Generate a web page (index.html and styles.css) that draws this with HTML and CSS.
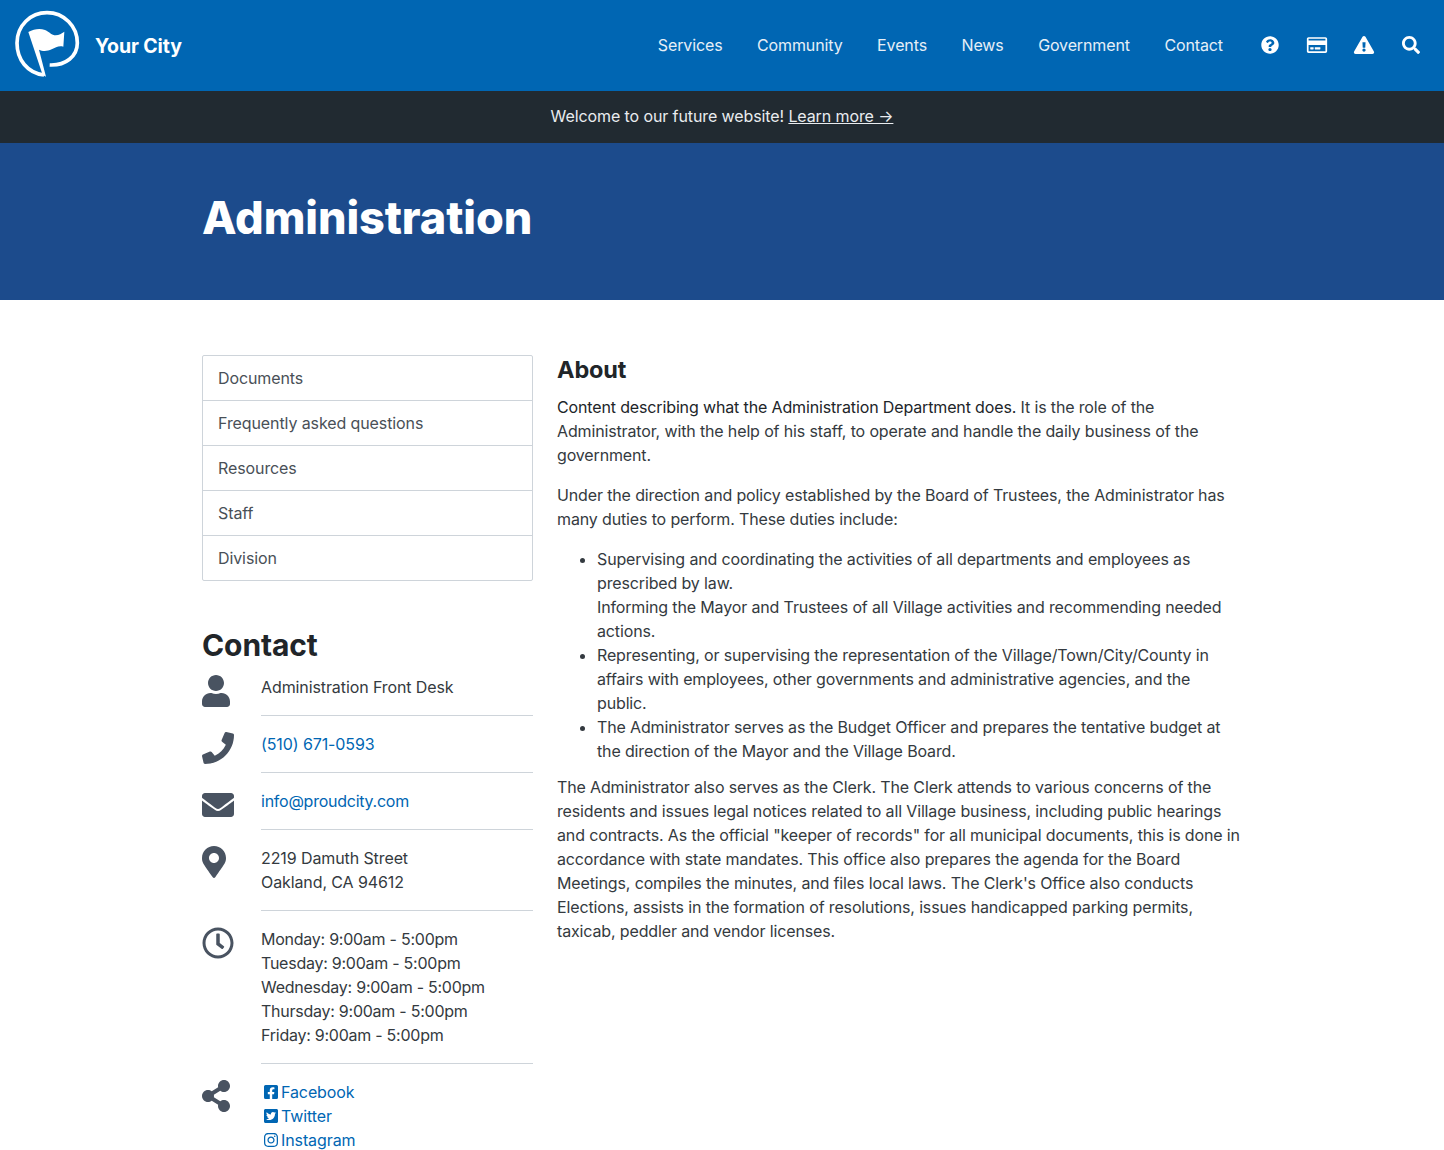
FILE: index.html
```html
<!DOCTYPE html>
<html lang="en">

<head>
  <meta charset="UTF-8">
  <meta name="viewport" content="width=device-width, initial-scale=1.0">
  <title>Administration</title>
  <link rel="stylesheet" href="styles.css">
</head>

<body>
  <header class="topbar">
    <a class="brand" href="#">
      <svg class="brand-logo" viewBox="0 0 222 222" aria-hidden="true">
        <path class="brand-ring" d="M105 201C55 195 24 155 24 105 24 52 65 14 114 14 165 14 205 55 205 105 205 145 170 173 122 171" />
        <path class="brand-flag" d="M58 72C75 63 92 60 108 66 122 72 128 82 140 82 150 82 158 76 166 71L163 116C150 112 140 118 128 124 115 130 100 130 90 125L111 206 101 201Z" />
      </svg>
      <span class="brand-name">Your City</span>
    </a>
    <nav class="main-nav">
      <a href="#">Services</a>
      <a href="#">Community</a>
      <a href="#">Events</a>
      <a href="#">News</a>
      <a href="#">Government</a>
      <a href="#">Contact</a>
    </nav>
    <div class="tool-icons">
      <svg viewBox="0 0 512 512" class="tool-icon"><path d="M504 256c0 136.997-111.043 248-248 248S8 392.997 8 256C8 119.083 119.043 8 256 8s248 111.083 248 248zM262.655 90c-54.497 0-89.255 22.957-116.549 63.758-3.536 5.286-2.353 12.415 2.715 16.258l34.699 26.31c5.205 3.947 12.621 3.008 16.665-2.122 17.864-22.658 30.113-35.797 57.303-35.797 20.429 0 45.698 13.148 45.698 32.958 0 14.976-12.363 22.667-32.534 33.976C247.128 238.528 216 254.941 216 296v4c0 6.627 5.373 12 12 12h56c6.627 0 12-5.373 12-12v-1.333c0-28.462 83.186-29.647 83.186-106.667 0-58.002-60.165-102-116.531-102zM256 338c-25.365 0-46 20.635-46 46 0 25.364 20.635 46 46 46s46-20.636 46-46c0-25.365-20.635-46-46-46z" /></svg>
      <svg viewBox="0 0 576 512" class="tool-icon"><path d="M527.900 32H48.100C21.500 32 0 53.500 0 80v352c0 26.500 21.500 48 48.100 48h479.800c26.600 0 48.100-21.500 48.100-48V80c0-26.500-21.500-48-48.100-48zM54.100 80h467.800c3.300 0 6 2.700 6 6v42H48.100V86c0-3.300 2.700-6 6-6zm467.800 352H54.100c-3.300 0-6-2.700-6-6V256h479.800v170c0 3.300-2.700 6-6 6zM192 332v40c0 6.600-5.400 12-12 12h-72c-6.600 0-12-5.400-12-12v-40c0-6.600 5.400-12 12-12h72c6.600 0 12 5.400 12 12zm192 0v40c0 6.600-5.400 12-12 12H236c-6.600 0-12-5.400-12-12v-40c0-6.600 5.400-12 12-12h136c6.600 0 12 5.400 12 12z" /></svg>
      <svg viewBox="0 0 576 512" class="tool-icon"><path d="M569.517 440.013C587.975 472.007 564.806 512 527.940 512H48.054c-36.937 0-59.999-40.055-41.577-71.987L246.423 24.005c18.467-32.009 64.720-31.951 83.154 0l239.940 416.008zM288 354c-25.405 0-46 20.595-46 46s20.595 46 46 46 46-20.595 46-46-20.595-46-46-46zm-43.673-165.346l7.418 136c.347 6.364 5.609 11.346 11.982 11.346h48.546c6.373 0 11.635-4.982 11.982-11.346l7.418-136c.375-6.874-5.098-12.654-11.982-12.654h-63.383c-6.884 0-12.356 5.780-11.981 12.654z" /></svg>
      <svg viewBox="0 0 512 512" class="tool-icon"><path d="M505 442.700L405.300 343c-4.500-4.500-10.600-7-17-7H372c27.600-35.300 44-79.700 44-128C416 93.100 322.900 0 208 0S0 93.100 0 208s93.100 208 208 208c48.300 0 92.700-16.400 128-44v16.300c0 6.400 2.500 12.500 7 17l99.700 99.700c9.400 9.400 24.600 9.400 33.900 0l28.300-28.300c9.400-9.400 9.400-24.600.1-34zM208 336c-70.700 0-128-57.200-128-128 0-70.700 57.200-128 128-128 70.700 0 128 57.200 128 128 0 70.700-57.200 128-128 128z" /></svg>
    </div>
  </header>

  <div class="notice">Welcome to our future website! <a href="#">Learn more →</a></div>

  <section class="hero">
    <h1>Administration</h1>
  </section>

  <main class="page">
    <aside class="sidebar">
      <ul class="side-list">
        <li><a href="#">Documents</a></li>
        <li><a href="#">Frequently asked questions</a></li>
        <li><a href="#">Resources</a></li>
        <li><a href="#">Staff</a></li>
        <li><a href="#">Division</a></li>
      </ul>

      <h2 class="contact-title">Contact</h2>
      <div class="contact-row">
        <svg class="contact-icon" viewBox="0 0 448 512" preserveAspectRatio="xMinYMid"><path d="M224 256c70.700 0 128-57.300 128-128S294.700 0 224 0 96 57.300 96 128s57.300 128 128 128zm89.600 32h-16.700c-22.200 10.200-46.900 16-72.900 16s-50.600-5.800-72.900-16h-16.700C60.200 288 0 348.200 0 422.400V464c0 26.500 21.500 48 48 48h352c26.500 0 48-21.500 48-48v-41.600c0-74.200-60.200-134.400-134.400-134.400z" /></svg>
        <div class="contact-text">Administration Front Desk</div>
      </div>
      <div class="contact-row">
        <svg class="contact-icon" viewBox="0 0 512 512" preserveAspectRatio="xMinYMid"><path d="M493.400 24.600l-104-24c-11.300-2.600-22.900 3.300-27.500 13.900l-48 112c-4.200 9.800-1.400 21.300 6.900 28l60.600 49.600c-36 76.700-98.900 140.500-177.200 177.200l-49.600-60.600c-6.800-8.300-18.200-11.100-28-6.900l-112 48C3.900 366.500-2 378.100.6 389.400l24 104C27.100 504.200 36.700 512 48 512c256.100 0 464-207.500 464-464 0-11.200-7.700-20.900-18.600-23.400z" /></svg>
        <div class="contact-text"><a href="#">(510) 671-0593</a></div>
      </div>
      <div class="contact-row">
        <svg class="contact-icon" viewBox="0 0 512 512" preserveAspectRatio="xMinYMid"><path d="M502.300 190.800c3.900-3.100 9.700-.2 9.700 4.700V400c0 26.500-21.500 48-48 48H48c-26.500 0-48-21.500-48-48V195.600c0-5 5.700-7.800 9.700-4.700 22.400 17.400 52.100 39.500 154.100 113.600 21.100 15.400 56.700 47.800 92.200 47.600 35.700.3 72-32.800 92.300-47.600 102-74.100 131.600-96.300 154-113.700zM256 320c23.200.4 56.600-29.200 73.400-41.400 132.700-96.300 142.800-104.700 173.400-128.700 5.800-4.500 9.200-11.500 9.200-18.900v-19c0-26.500-21.500-48-48-48H48C21.500 64 0 85.500 0 112v19c0 7.400 3.400 14.300 9.200 18.900 30.600 23.900 40.700 32.400 173.400 128.700 16.800 12.200 50.200 41.800 73.400 41.400z" /></svg>
        <div class="contact-text tight"><a href="#">info@proudcity.com</a></div>
      </div>
      <div class="contact-row">
        <svg class="contact-icon" viewBox="0 0 384 512" preserveAspectRatio="xMinYMid"><path d="M172.268 501.670C26.970 291.031 0 269.413 0 192 0 85.961 85.961 0 192 0s192 85.961 192 192c0 77.413-26.970 99.031-172.268 309.670-9.535 13.774-29.930 13.773-39.464 0zM192 272c44.183 0 80-35.817 80-80s-35.817-80-80-80-80 35.817-80 80 35.817 80 80 80z" /></svg>
        <div class="contact-text">2219 Damuth Street<br>Oakland, CA 94612</div>
      </div>
      <div class="contact-row">
        <svg class="contact-icon" viewBox="0 0 512 512" preserveAspectRatio="xMinYMid"><path d="M256 8C119 8 8 119 8 256s111 248 248 248 248-111 248-248S393 8 256 8zm0 448c-110.500 0-200-89.500-200-200S145.500 56 256 56s200 89.500 200 200-89.500 200-200 200zm61.800-104.400l-84.900-61.700c-3.100-2.300-4.900-5.900-4.900-9.700V116c0-6.600 5.400-12 12-12h32c6.600 0 12 5.400 12 12v141.700l66.800 48.600c5.400 3.900 6.500 11.400 2.600 16.800L334.600 349c-3.900 5.300-11.400 6.500-16.800 2.600z" /></svg>
        <div class="contact-text tight">Monday: 9:00am - 5:00pm<br>Tuesday: 9:00am - 5:00pm<br>Wednesday: 9:00am - 5:00pm<br>Thursday: 9:00am - 5:00pm<br>Friday: 9:00am - 5:00pm</div>
      </div>
      <div class="contact-row">
        <svg class="contact-icon" viewBox="0 0 448 512" preserveAspectRatio="xMinYMid"><path d="M352 320c-22.608 0-43.387 7.819-59.790 20.895l-102.486-64.054a96.551 96.551 0 0 0 0-41.683l102.486-64.054C308.613 184.181 329.392 192 352 192c53.019 0 96-42.981 96-96S405.019 0 352 0s-96 42.981-96 96c0 7.158.79 14.130 2.276 20.841L155.790 180.895C139.387 167.819 118.608 160 96 160c-53.019 0-96 42.981-96 96s42.981 96 96 96c22.608 0 43.387-7.819 59.790-20.895l102.486 64.054A96.301 96.301 0 0 0 256 416c0 53.019 42.981 96 96 96s96-42.981 96-96-42.981-96-96-96z" /></svg>
        <div class="contact-text social">
          <a href="#"><svg viewBox="0 0 448 512"><path d="M400 32H48A48 48 0 0 0 0 80v352a48 48 0 0 0 48 48h137.250V327.690h-63V256h63v-54.640c0-62.150 37-96.480 93.670-96.480 27.140 0 55.520 4.840 55.520 4.840v61h-31.270c-30.810 0-40.420 19.120-40.420 38.730V256h68.780l-11 71.690h-57.780V480H400a48 48 0 0 0 48-48V80a48 48 0 0 0-48-48z" /></svg>Facebook</a>
          <a href="#"><svg viewBox="0 0 448 512"><path d="M400 32H48C21.500 32 0 53.500 0 80v352c0 26.500 21.500 48 48 48h352c26.500 0 48-21.500 48-48V80c0-26.500-21.500-48-48-48zm-48.900 158.800c.2 2.800.2 5.700.2 8.500 0 86.700-66 186.600-186.600 186.600-37.200 0-71.700-10.800-100.700-29.400 5.300.6 10.400.8 15.800.8 30.700 0 58.900-10.400 81.400-28-28.800-.6-53-19.500-61.300-45.500 10.100 1.500 19.200 1.500 29.600-1.200-30-6.100-52.500-32.500-52.500-64.400v-.8c8.700 4.900 18.900 7.900 29.600 8.300a65.447 65.447 0 0 1-29.200-54.600c0-12.200 3.200-23.400 8.900-33.100 32.300 39.800 80.800 65.800 135.200 68.600-9.300-44.500 24-80.600 64-80.600 18.900 0 35.900 7.900 47.900 20.700 14.800-2.800 29-8.300 41.600-15.800-4.900 15.200-15.100 28-28.600 36 13.100-1.400 25.800-5 37.500-10.100-8.900 13.100-20.100 24.700-32.900 34z" /></svg>Twitter</a>
          <a href="#"><svg viewBox="0 0 448 512"><path d="M224.100 141c-63.600 0-114.900 51.300-114.900 114.900s51.300 114.900 114.900 114.900S339 319.500 339 255.900 287.700 141 224.100 141zm0 189.600c-41.100 0-74.700-33.500-74.700-74.700s33.500-74.700 74.700-74.700 74.700 33.500 74.700 74.700-33.600 74.700-74.700 74.700zm146.400-194.300c0 14.900-12 26.800-26.800 26.800-14.900 0-26.800-12-26.800-26.800s12-26.800 26.800-26.800 26.800 12 26.800 26.800zm76.100 27.200c-1.700-35.900-9.900-67.700-36.200-93.900-26.200-26.200-58-34.400-93.900-36.200-37-2.100-147.900-2.100-184.900 0-35.800 1.700-67.600 9.900-93.900 36.100s-34.400 58-36.200 93.900c-2.100 37-2.100 147.900 0 184.900 1.700 35.900 9.900 67.700 36.200 93.900s58 34.400 93.900 36.200c37 2.100 147.900 2.100 184.900 0 35.900-1.700 67.700-9.900 93.900-36.200 26.200-26.200 34.400-58 36.200-93.900 2.100-37 2.100-147.800 0-184.800zM398.800 388c-7.800 19.600-22.900 34.700-42.600 42.600-29.500 11.700-99.500 9-132.100 9s-102.700 2.600-132.100-9c-19.600-7.800-34.700-22.900-42.600-42.600-11.700-29.500-9-99.500-9-132.100s-2.600-102.700 9-132.100c7.800-19.600 22.900-34.700 42.600-42.600 29.500-11.700 99.500-9 132.100-9s102.700-2.600 132.100 9c19.600 7.800 34.700 22.900 42.600 42.600 11.700 29.500 9 99.500 9 132.100s2.700 102.700-9 132.100z" /></svg>Instagram</a>
        </div>
      </div>
    </aside>

    <article class="about">
      <h2>About</h2>
      <p><span class="lead">Content describing what the Administration Department does.</span> It is the role of the Administrator, with the help of his staff, to operate and handle the daily business of the government.</p>
      <p>Under the direction and policy established by the Board of Trustees, the Administrator has many duties to perform. These duties include:</p>
      <ul>
        <li>Supervising and coordinating the activities of all departments and employees as prescribed by law.<br>Informing the Mayor and Trustees of all Village activities and recommending needed actions.</li>
        <li>Representing, or supervising the representation of the Village/Town/City/County in affairs with employees, other governments and administrative agencies, and the public.</li>
        <li>The Administrator serves as the Budget Officer and prepares the tentative budget at the direction of the Mayor and the Village Board.</li>
      </ul>
      <p>The Administrator also serves as the Clerk. The Clerk attends to various concerns of the residents and issues legal notices related to all Village business, including public hearings and contracts. As the official "keeper of records" for all municipal documents, this is done in accordance with state mandates. This office also prepares the agenda for the Board Meetings, compiles the minutes, and files local laws. The Clerk's Office also conducts Elections, assists in the formation of resolutions, issues handicapped parking permits, taxicab, peddler and vendor licenses.</p>
    </article>
  </main>
</body>

</html>
```

FILE: styles.css
```css
html {
  box-sizing: border-box;
}

*,
*::before,
*::after {
  box-sizing: inherit;
}

body {
  margin: 0;
  font-family: Inter, "Liberation Sans", sans-serif;
  font-size: 16px;
  line-height: 24px;
  letter-spacing: -0.1px;
  color: #343a40;
  background: #fff;
}

a {
  color: #0066b3;
  text-decoration: none;
}

.topbar {
  display: flex;
  align-items: center;
  height: 91px;
  padding: 0 21px 0 9px;
  background: #0066b3;
}

.brand {
  display: flex;
  align-items: center;
  gap: 12px;
  color: #fff;
}

.brand-logo {
  width: 74px;
  height: 74px;
  margin-top: -1px;
}

.brand-ring {
  fill: none;
  stroke: #fff;
  stroke-width: 11;
}

.brand-flag {
  fill: #fff;
}

.brand-name {
  font-size: 19.500px;
  font-weight: 700;
}

.main-nav {
  display: flex;
  gap: 34.500px;
  margin-left: auto;
  padding-bottom: 2px;
  letter-spacing: -0.120px;
}

.main-nav a {
  color: #e6eff7;
}

.tool-icons {
  display: flex;
  align-items: center;
  gap: 23px;
  margin-left: 35px;
  padding-bottom: 2px;
}

.tool-icon {
  width: 24px;
  height: 18px;
  fill: #fff;
}

.notice {
  height: 52px;
  padding-top: 13px;
  text-align: center;
  color: #e9ecef;
  background: #212a31;
}

.notice a {
  color: #e9ecef;
  text-decoration: underline;
}

.hero {
  height: 157px;
  padding: 47px 0 0 202px;
  background: #1c4b8c;
}

.hero h1 {
  margin: 0;
  font-size: 45px;
  line-height: 55px;
  font-weight: 800;
  color: #fff;
}

.page {
  display: grid;
  grid-template-columns: 331px 685px;
  gap: 24px;
  padding: 55px 0 0 202px;
}

.side-list {
  margin: 0;
  padding: 0;
  list-style: none;
  border: 1px solid #ced4da;
  border-radius: 2px;
}

.side-list li {
  height: 45px;
  border-top: 1px solid #ced4da;
}

.side-list li:first-child {
  height: 44px;
  border-top: 0;
}

.side-list a {
  display: block;
  padding: 10px 15px;
  color: #495057;
}

.contact-title {
  margin: 45px 0 11px;
  font-size: 30px;
  line-height: 38px;
  font-weight: 700;
  color: #212529;
}

.contact-row {
  display: grid;
  grid-template-columns: 59px 1fr;
}

.contact-icon {
  width: 32px;
  height: 32px;
  fill: #495361;
}

.contact-text {
  padding: 16px 0;
  border-bottom: 1px solid #ced4da;
}

.contact-text.tight {
  letter-spacing: -0.250px;
}

.contact-title + .contact-row .contact-text {
  padding-top: 0;
}

.contact-row:last-child .contact-text {
  border-bottom: 0;
  padding-bottom: 0;
}

.contact-row + .contact-row .contact-icon {
  margin-top: 16px;
}

.social a {
  display: flex;
  align-items: center;
  gap: 3px;
}

.social svg {
  width: 14px;
  height: 16px;
  margin-left: 3px;
  fill: #0066b3;
}

.about {
  letter-spacing: -0.140px;
}

.about h2 {
  margin: 0 0 10px;
  font-size: 23.500px;
  line-height: 30px;
  font-weight: 700;
  color: #212529;
}

.about p {
  margin: 0 0 16px;
}

.about ul {
  margin: 0 0 12px;
  padding-left: 40px;
}

.lead {
  color: #212529;
}
```
